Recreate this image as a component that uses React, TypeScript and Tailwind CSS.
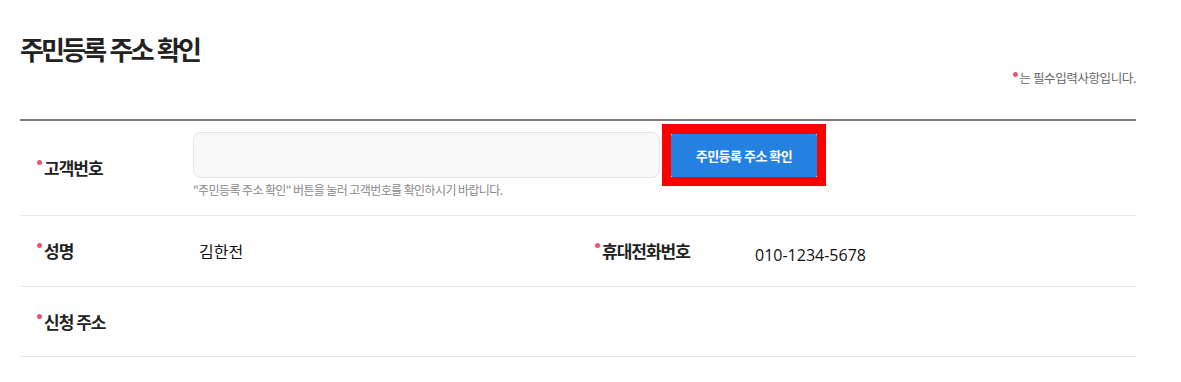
import React from 'react';

const Dot: React.FC = () => (
  <span className="inline-block w-[5px] h-[5px] rounded-full bg-[#ea5470] mt-[3px] mr-[2px] shrink-0" />
);

const Label: React.FC<{ text: string }> = ({ text }) => (
  <div className="flex items-start">
    <Dot />
    <span className="text-[17px] leading-[22px] font-bold tracking-[-1px] text-[#222]">{text}</span>
  </div>
);

const App: React.FC = () => {
  return (
    <div className="w-[1181px] h-[382px] bg-white font-['Noto_Sans_CJK_KR',sans-serif] overflow-hidden">
      <div className="ml-[20px] w-[1116px]">
        <h1 className="pt-[31px] text-[26px] leading-[36px] font-bold tracking-[-2.8px] [word-spacing:2px] text-[#222]">
          주민등록 주소 확인
        </h1>
        <div className="flex justify-end mt-[2px]">
          <div className="flex items-start text-[12.5px] leading-[18px] tracking-[-0.4px] text-[#666]">
            <Dot />
            <span>는 필수입력사항입니다.</span>
          </div>
        </div>

        <div className="mt-[32px] border-t-2 border-[#7b7b7b]">
          {/* 고객번호 */}
          <div className="flex h-[95px] border-b border-[#e8e8e8]">
            <div className="w-[173px] pl-[17px] flex items-center">
              <Label text="고객번호" />
            </div>
            <div className="pt-[11px]">
              <div className="flex items-center h-[46px]">
                <input
                  type="text"
                  className="w-[467px] h-[46px] rounded-[8px] border border-[#e3e3e3] bg-[#f8f8f8] outline-none"
                />
                <div className="ml-[2px] border-[9px] border-t-[10px] border-[#ff0000]">
                  <button className="w-[146px] h-[43px] bg-[#2481e2] rounded-[2px] text-white text-[13px] font-bold tracking-[-0.5px]">
                    주민등록 주소 확인
                  </button>
                </div>
              </div>
              <p className="mt-[3px] text-[12px] leading-[18px] tracking-[-0.6px] text-[#888]">
                "주민등록 주소 확인" 버튼을 눌러 고객번호를 확인하시기 바랍니다.
              </p>
            </div>
          </div>

          {/* 성명 / 휴대전화번호 */}
          <div className="flex items-center h-[71px] border-b border-[#e8e8e8]">
            <div className="w-[173px] pl-[17px]">
              <Label text="성명" />
            </div>
            <div className="w-[402px] pl-[6px] text-[16px] leading-[22px] text-[#111]">김한전</div>
            <div className="w-[160px]">
              <Label text="휴대전화번호" />
            </div>
            <div className="pt-[8px] font-['Open_Sans',sans-serif] text-[16px] leading-[22px] text-[#111]">
              010-1234-5678
            </div>
          </div>

          {/* 신청 주소 */}
          <div className="flex items-center h-[70px] border-b border-[#e8e8e8]">
            <div className="w-[173px] pl-[17px]">
              <Label text="신청 주소" />
            </div>
          </div>
        </div>
      </div>
    </div>
  );
};

export default App;
